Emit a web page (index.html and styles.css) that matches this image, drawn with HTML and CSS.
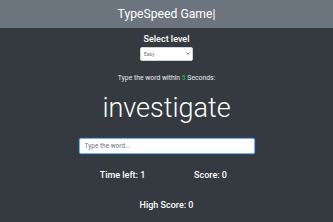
FILE: index.html
```html
<!DOCTYPE html>
<html lang="en">
<head>
  <meta charset="UTF-8">
  <title>TypeSpeed Game</title>
  <link rel="stylesheet" href="styles.css">
</head>
<body>
  <header class="navbar">
    <h1 class="title">TypeSpeed Game|</h1>
  </header>

  <main class="game">
    <h2 class="level-label">Select level</h2>
    <div class="select-wrap">
      <select class="level-select" id="level">
        <option value="easy">Easy</option>
        <option value="medium">Medium</option>
        <option value="hard">Hard</option>
      </select>
      <svg class="chevron" width="4" height="3" viewBox="0 0 4 3">
        <path d="M0.5 0.8 L2 2.2 L3.5 0.8" fill="none" stroke="#343a40" stroke-width="0.8"/>
      </svg>
    </div>

    <p class="hint">Type the word within <span class="seconds">5</span> Seconds:</p>

    <h3 class="current-word">investigate</h3>

    <input type="text" class="word-input" placeholder="Type the word...">

    <div class="stats">
      <div class="stat">Time left: <span id="time">1</span></div>
      <div class="stat">Score: <span id="score">0</span></div>
    </div>

    <p class="high-score">High Score: <span id="high-score">0</span></p>
  </main>
</body>
</html>
```

FILE: styles.css
```css
body {
  margin: 0;
  font-family: Roboto, "Liberation Sans", Arial, sans-serif;
  background-color: #343a40;
  color: #fff;
  height: 100vh;
}
.navbar {
  background-color: #6c757d;
  height: 28px;
  display: flex;
  justify-content: center;
  align-items: center;
}
.title {
  margin: 0;
  font-size: 12.2px;
  font-weight: normal;
  line-height: 14px;
}
.game {
  text-align: center;
}
.level-label {
  margin: 5px 0 0;
  font-size: 9px;
  line-height: 12px;
  font-weight: 500;
}
.select-wrap {
  position: relative;
  display: inline-block;
  margin-top: 2px;
  vertical-align: top;
}
.level-select {
  display: block;
  -webkit-appearance: none;
  appearance: none;
  width: 53px;
  height: 14px;
  margin: 0;
  font-family: inherit;
  font-size: 5px;
  padding: 0 3px;
  border: 1px solid #ced4da;
  border-radius: 2px;
  background-color: #fff;
  color: #6c757d;
}
.chevron {
  position: absolute;
  right: 3px;
  top: 5px;
}
.hint {
  margin: 9px 0 0;
  font-size: 6.8px;
  line-height: 10px;
  color: #e9ecef;
}
.seconds {
  color: #28a745;
  font-weight: bold;
}
.current-word {
  margin: 10px 0 0;
  font-size: 27px;
  line-height: 30px;
  font-weight: 300;
}
.word-input {
  display: block;
  box-sizing: border-box;
  width: 176px;
  height: 16px;
  margin: 15px auto 0;
  padding: 0 5px;
  font-family: inherit;
  font-size: 6.5px;
  border: 1px solid #80a8e0;
  border-radius: 2px;
  box-shadow: 0 0 0 1px rgba(0, 123, 255, 0.25);
  color: #495057;
}
.word-input::placeholder {
  color: #6c757d;
}
.stats {
  width: 176px;
  margin: 15px auto 0;
  display: grid;
  grid-template-columns: 1fr 1fr;
}
.stat {
  font-size: 9px;
  line-height: 12px;
  font-weight: 500;
}
.high-score {
  margin: 18px 0 0;
  font-size: 9px;
  line-height: 12px;
  font-weight: 500;
}
```
